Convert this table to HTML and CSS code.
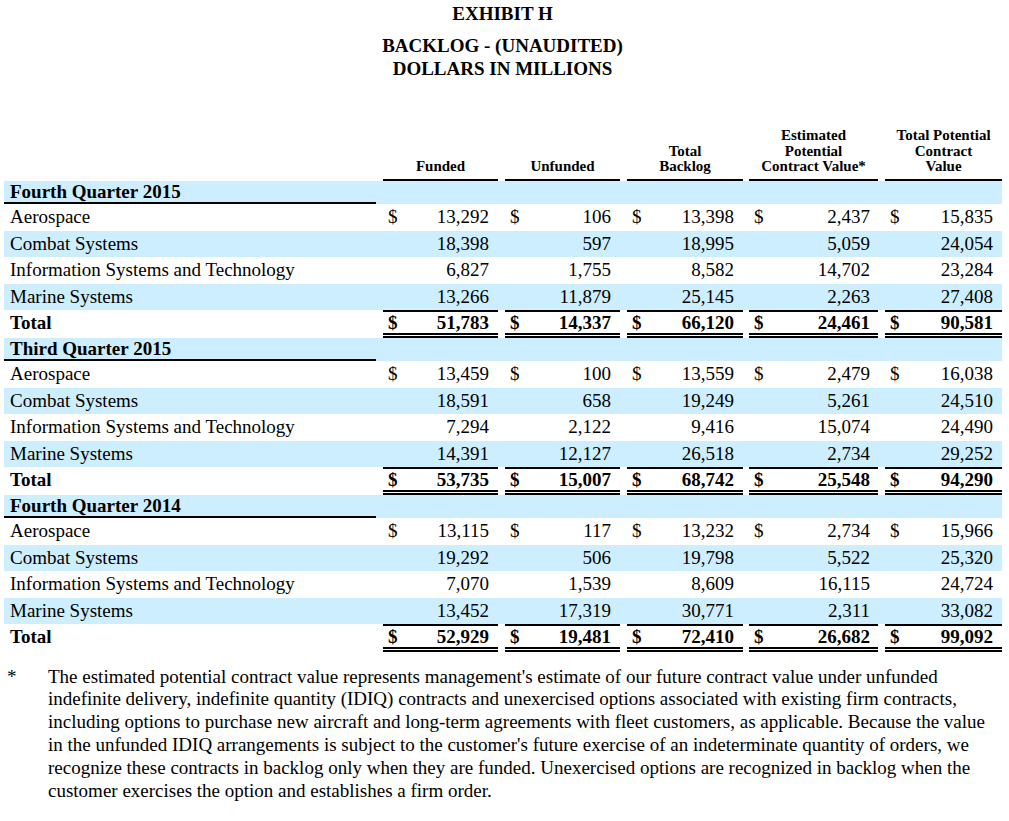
FILE: index.html
```html
<!DOCTYPE html>
<html>
<head>
<meta charset="utf-8">
<link rel="stylesheet" href="styles.css">
</head>
<body>
<div class="doc">
  <h1 class="title">EXHIBIT H</h1>
  <h2 class="subtitle">BACKLOG - (UNAUDITED)<br>DOLLARS IN MILLIONS</h2>

  <table class="backlog">
    <colgroup>
      <col class="c-label"><col class="c-sp">
      <col class="c-cur"><col class="c-n1"><col class="c-sp">
      <col class="c-cur"><col class="c-n2"><col class="c-sp">
      <col class="c-cur"><col class="c-n3"><col class="c-sp6">
      <col class="c-cur"><col class="c-n4"><col class="c-sp">
      <col class="c-cur"><col class="c-n5">
    </colgroup>
    <thead>
      <tr class="hdr">
        <th></th><th></th>
        <th class="grp" colspan="2">Funded</th><th></th>
        <th class="grp" colspan="2">Unfunded</th><th></th>
        <th class="grp" colspan="2">Total<br>Backlog</th><th></th>
        <th class="grp" colspan="2">Estimated<br>Potential<br>Contract Value*</th><th></th>
        <th class="grp" colspan="2">Total Potential<br>Contract<br>Value</th>
      </tr>
    </thead>
    <tbody>
      <tr class="section blue"><td class="label">Fourth Quarter 2015</td><td colspan="15"></td></tr>
      <tr class="data"><td class="label">Aerospace</td><td></td><td class="cur">$</td><td class="num">13,292</td><td></td><td class="cur">$</td><td class="num">106</td><td></td><td class="cur">$</td><td class="num">13,398</td><td></td><td class="cur">$</td><td class="num n4">2,437</td><td></td><td class="cur">$</td><td class="num">15,835</td></tr>
      <tr class="data blue"><td class="label">Combat Systems</td><td></td><td class="cur"></td><td class="num">18,398</td><td></td><td class="cur"></td><td class="num">597</td><td></td><td class="cur"></td><td class="num">18,995</td><td></td><td class="cur"></td><td class="num n4">5,059</td><td></td><td class="cur"></td><td class="num">24,054</td></tr>
      <tr class="data"><td class="label">Information Systems and Technology</td><td></td><td class="cur"></td><td class="num">6,827</td><td></td><td class="cur"></td><td class="num">1,755</td><td></td><td class="cur"></td><td class="num">8,582</td><td></td><td class="cur"></td><td class="num n4">14,702</td><td></td><td class="cur"></td><td class="num">23,284</td></tr>
      <tr class="data blue"><td class="label">Marine Systems</td><td></td><td class="cur"></td><td class="num">13,266</td><td></td><td class="cur"></td><td class="num">11,879</td><td></td><td class="cur"></td><td class="num">25,145</td><td></td><td class="cur"></td><td class="num n4">2,263</td><td></td><td class="cur"></td><td class="num">27,408</td></tr>
      <tr class="total"><td class="label">Total</td><td></td><td class="cur ln">$</td><td class="num ln">51,783</td><td></td><td class="cur ln">$</td><td class="num ln">14,337</td><td></td><td class="cur ln">$</td><td class="num ln">66,120</td><td></td><td class="cur ln">$</td><td class="num n4 ln">24,461</td><td></td><td class="cur ln">$</td><td class="num ln">90,581</td></tr>

      <tr class="section blue"><td class="label">Third Quarter 2015</td><td colspan="15"></td></tr>
      <tr class="data"><td class="label">Aerospace</td><td></td><td class="cur">$</td><td class="num">13,459</td><td></td><td class="cur">$</td><td class="num">100</td><td></td><td class="cur">$</td><td class="num">13,559</td><td></td><td class="cur">$</td><td class="num n4">2,479</td><td></td><td class="cur">$</td><td class="num">16,038</td></tr>
      <tr class="data blue"><td class="label">Combat Systems</td><td></td><td class="cur"></td><td class="num">18,591</td><td></td><td class="cur"></td><td class="num">658</td><td></td><td class="cur"></td><td class="num">19,249</td><td></td><td class="cur"></td><td class="num n4">5,261</td><td></td><td class="cur"></td><td class="num">24,510</td></tr>
      <tr class="data"><td class="label">Information Systems and Technology</td><td></td><td class="cur"></td><td class="num">7,294</td><td></td><td class="cur"></td><td class="num">2,122</td><td></td><td class="cur"></td><td class="num">9,416</td><td></td><td class="cur"></td><td class="num n4">15,074</td><td></td><td class="cur"></td><td class="num">24,490</td></tr>
      <tr class="data blue"><td class="label">Marine Systems</td><td></td><td class="cur"></td><td class="num">14,391</td><td></td><td class="cur"></td><td class="num">12,127</td><td></td><td class="cur"></td><td class="num">26,518</td><td></td><td class="cur"></td><td class="num n4">2,734</td><td></td><td class="cur"></td><td class="num">29,252</td></tr>
      <tr class="total"><td class="label">Total</td><td></td><td class="cur ln">$</td><td class="num ln">53,735</td><td></td><td class="cur ln">$</td><td class="num ln">15,007</td><td></td><td class="cur ln">$</td><td class="num ln">68,742</td><td></td><td class="cur ln">$</td><td class="num n4 ln">25,548</td><td></td><td class="cur ln">$</td><td class="num ln">94,290</td></tr>

      <tr class="section blue"><td class="label">Fourth Quarter 2014</td><td colspan="15"></td></tr>
      <tr class="data"><td class="label">Aerospace</td><td></td><td class="cur">$</td><td class="num">13,115</td><td></td><td class="cur">$</td><td class="num">117</td><td></td><td class="cur">$</td><td class="num">13,232</td><td></td><td class="cur">$</td><td class="num n4">2,734</td><td></td><td class="cur">$</td><td class="num">15,966</td></tr>
      <tr class="data blue"><td class="label">Combat Systems</td><td></td><td class="cur"></td><td class="num">19,292</td><td></td><td class="cur"></td><td class="num">506</td><td></td><td class="cur"></td><td class="num">19,798</td><td></td><td class="cur"></td><td class="num n4">5,522</td><td></td><td class="cur"></td><td class="num">25,320</td></tr>
      <tr class="data"><td class="label">Information Systems and Technology</td><td></td><td class="cur"></td><td class="num">7,070</td><td></td><td class="cur"></td><td class="num">1,539</td><td></td><td class="cur"></td><td class="num">8,609</td><td></td><td class="cur"></td><td class="num n4">16,115</td><td></td><td class="cur"></td><td class="num">24,724</td></tr>
      <tr class="data blue"><td class="label">Marine Systems</td><td></td><td class="cur"></td><td class="num">13,452</td><td></td><td class="cur"></td><td class="num">17,319</td><td></td><td class="cur"></td><td class="num">30,771</td><td></td><td class="cur"></td><td class="num n4">2,311</td><td></td><td class="cur"></td><td class="num">33,082</td></tr>
      <tr class="total"><td class="label">Total</td><td></td><td class="cur ln">$</td><td class="num ln">52,929</td><td></td><td class="cur ln">$</td><td class="num ln">19,481</td><td></td><td class="cur ln">$</td><td class="num ln">72,410</td><td></td><td class="cur ln">$</td><td class="num n4 ln">26,682</td><td></td><td class="cur ln">$</td><td class="num ln">99,092</td></tr>
    </tbody>
  </table>

  <div class="note">
    <div class="note-mark">*</div>
    <p class="note-text">The estimated potential contract value represents management's estimate of our future contract value under unfunded indefinite delivery, indefinite quantity (IDIQ) contracts and unexercised options associated with existing firm contracts, including options to purchase new aircraft and long-term agreements with fleet customers, as applicable. Because the value in the unfunded IDIQ arrangements is subject to the customer's future exercise of an indeterminate quantity of orders, we recognize these contracts in backlog only when they are funded. Unexercised options are recognized in backlog when the customer exercises the option and establishes a firm order.</p>
  </div>
</div>
</body>
</html>
```

FILE: styles.css
```css
html, body {
  margin: 0;
  padding: 0;
  background: #ffffff;
}

body {
  font-family: "Liberation Serif", "Times New Roman", serif;
  color: #000000;
}

.doc {
  width: 1005px;
}

.title {
  margin: 0;
  padding-top: 1.5px;
  font-size: 19px;
  line-height: 23px;
  font-weight: bold;
  text-align: center;
}

.subtitle {
  margin: 9px 0 0 0;
  font-size: 19px;
  line-height: 23px;
  font-weight: bold;
  text-align: center;
}

.backlog {
  margin: 48.5px 0 0 4px;
  width: 998px;
  table-layout: fixed;
  border-collapse: separate;
  border-spacing: 0;
  font-size: 19px;
}

.c-label { width: 372px; }
.c-sp { width: 7px; }
.c-sp6 { width: 6px; }
.c-cur { width: 20px; }
.c-n1 { width: 95px; }
.c-n2 { width: 95px; }
.c-n3 { width: 96px; }
.c-n4 { width: 109px; }
.c-n5 { width: 97px; }

.backlog td,
.backlog th {
  padding: 0;
  white-space: nowrap;
}

.hdr th {
  font-size: 15px;
  line-height: 15.5px;
  font-weight: bold;
  vertical-align: bottom;
  text-align: center;
  padding-bottom: 4.5px;
}

.hdr th.grp {
  border-bottom: 2px solid #000000;
}

.blue td {
  background: #cceeff;
}

.backlog tbody td {
  line-height: 20px;
  vertical-align: middle;
}

.section {
  height: 23px;
}

.section .label {
  font-weight: bold;
  border-bottom: 2px solid #000000;
}

.data {
  height: 26.5px;
}

.total {
  height: 28px;
  font-weight: bold;
}

.total td {
  border-top: 2px solid transparent;
  border-bottom: 5px double transparent;
}

.total td.ln {
  border-top-color: #000000;
  border-bottom-color: #000000;
}

.label {
  padding-left: 6px !important;
}

.cur {
  padding-left: 5px !important;
  text-align: left;
}

.num {
  text-align: right;
  padding-right: 9px !important;
}

.num.n4 {
  padding-right: 8px !important;
}

.note {
  display: flex;
  margin-top: 13.6px;
  padding-left: 7px;
  font-size: 19px;
  line-height: 22.8px;
}

.note-mark {
  width: 41px;
  flex: none;
}

.note-text {
  margin: 0;
  width: 950px;
}
```
